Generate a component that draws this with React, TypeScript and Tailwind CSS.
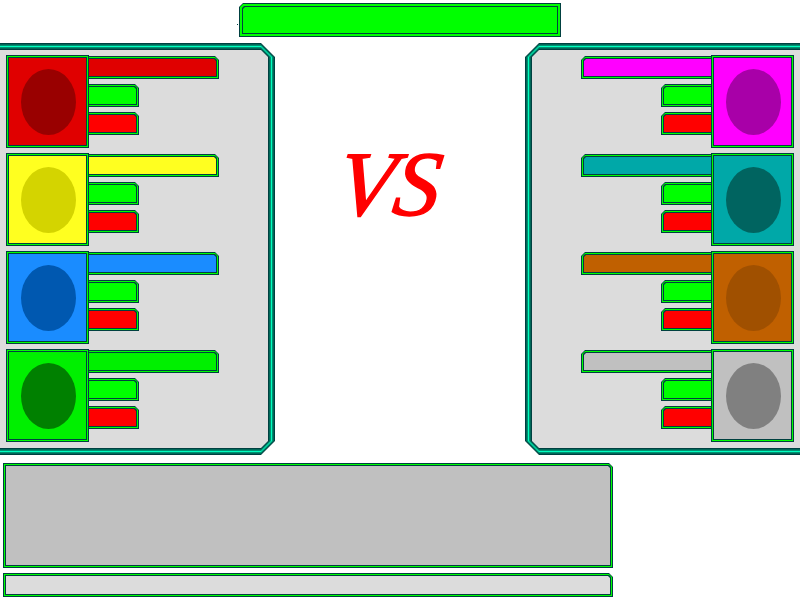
import type { ReactNode } from "react";

// clip per ring, outer to inner. The chamfer shrinks with each ring so the
// diagonal starts at the same spot on every layer
const CLIPS = {
  none: ["", "", "", ""],
  tr: [
    "[clip-path:polygon(0_0,calc(100%-4px)_0,100%_4px,100%_100%,0_100%)]",
    "[clip-path:polygon(0_0,calc(100%-3px)_0,100%_3px,100%_100%,0_100%)]",
    "[clip-path:polygon(0_0,calc(100%-2px)_0,100%_2px,100%_100%,0_100%)]",
    "[clip-path:polygon(0_0,calc(100%-2px)_0,100%_2px,100%_100%,0_100%)]",
  ],
  tl: [
    "[clip-path:polygon(4px_0,100%_0,100%_100%,0_100%,0_4px)]",
    "[clip-path:polygon(3px_0,100%_0,100%_100%,0_100%,0_3px)]",
    "[clip-path:polygon(2px_0,100%_0,100%_100%,0_100%,0_2px)]",
    "[clip-path:polygon(2px_0,100%_0,100%_100%,0_100%,0_2px)]",
  ],
};

function Frame({
  clip = "none",
  fill,
  ring = "p-px",
  className = "",
  children,
}: {
  clip?: "none" | "tr" | "tl";
  fill: string;
  ring?: string;
  className?: string;
  children?: ReactNode;
}) {
  const c = CLIPS[clip];
  return (
    <div className={`${c[0]} ${className} bg-[#004040] p-px`}>
      <div className={`${c[1]} ${ring} h-full bg-[#00ff00]`}>
        <div className={`${c[2]} h-full bg-[#004040] p-px`}>
          <div className={`${c[3]} ${fill} h-full`}>{children}</div>
        </div>
      </div>
    </div>
  );
}

// stepped bevel, 1px per band
const LEFT_RINGS = [
  "bg-[#004040] [clip-path:polygon(0_0,calc(100%-14px)_0,100%_14px,100%_calc(100%-14px),calc(100%-14px)_100%,0_100%)]",
  "bg-[#006858] [clip-path:polygon(0_0,calc(100%-13px)_0,100%_13px,100%_calc(100%-13px),calc(100%-13px)_100%,0_100%)]",
  "bg-[#009070] [clip-path:polygon(0_0,calc(100%-12px)_0,100%_12px,100%_calc(100%-12px),calc(100%-12px)_100%,0_100%)]",
  "bg-[#00ffc0] [clip-path:polygon(0_0,calc(100%-11px)_0,100%_11px,100%_calc(100%-11px),calc(100%-11px)_100%,0_100%)]",
  "bg-[#009070] [clip-path:polygon(0_0,calc(100%-10px)_0,100%_10px,100%_calc(100%-10px),calc(100%-10px)_100%,0_100%)]",
  "bg-[#006858] [clip-path:polygon(0_0,calc(100%-9px)_0,100%_9px,100%_calc(100%-9px),calc(100%-9px)_100%,0_100%)]",
  "bg-[#004040] [clip-path:polygon(0_0,calc(100%-8px)_0,100%_8px,100%_calc(100%-8px),calc(100%-8px)_100%,0_100%)]",
  "bg-[#dcdcdc] [clip-path:polygon(0_0,calc(100%-7px)_0,100%_7px,100%_calc(100%-7px),calc(100%-7px)_100%,0_100%)]",
];

const RIGHT_RINGS = [
  "bg-[#004040] [clip-path:polygon(14px_0,100%_0,100%_100%,14px_100%,0_calc(100%-14px),0_14px)]",
  "bg-[#006858] [clip-path:polygon(13px_0,100%_0,100%_100%,13px_100%,0_calc(100%-13px),0_13px)]",
  "bg-[#009070] [clip-path:polygon(12px_0,100%_0,100%_100%,12px_100%,0_calc(100%-12px),0_12px)]",
  "bg-[#00ffc0] [clip-path:polygon(11px_0,100%_0,100%_100%,11px_100%,0_calc(100%-11px),0_11px)]",
  "bg-[#009070] [clip-path:polygon(10px_0,100%_0,100%_100%,10px_100%,0_calc(100%-10px),0_10px)]",
  "bg-[#006858] [clip-path:polygon(9px_0,100%_0,100%_100%,9px_100%,0_calc(100%-9px),0_9px)]",
  "bg-[#004040] [clip-path:polygon(8px_0,100%_0,100%_100%,8px_100%,0_calc(100%-8px),0_8px)]",
  "bg-[#dcdcdc] [clip-path:polygon(7px_0,100%_0,100%_100%,7px_100%,0_calc(100%-7px),0_7px)]",
];

function Panel({ rings, inner, children }: { rings: string[]; inner: string; children: ReactNode }) {
  return (
    <div className={`h-full p-px ${rings[0]}`}>
      <div className={`h-full p-px ${rings[1]}`}>
        <div className={`h-full p-px ${rings[2]}`}>
          <div className={`h-full p-px ${rings[3]}`}>
            <div className={`h-full p-px ${rings[4]}`}>
              <div className={`h-full p-px ${rings[5]}`}>
                <div className={`h-full p-px ${rings[6]}`}>
                  <div className={`flex h-full flex-col gap-[5px] pt-[5px] ${inner} ${rings[7]}`}>{children}</div>
                </div>
              </div>
            </div>
          </div>
        </div>
      </div>
    </div>
  );
}

interface Player {
  color: string;
  oval: string;
}

const leftTeam: Player[] = [
  { color: "bg-[#e00000]", oval: "bg-[#990000]" },
  { color: "bg-[#ffff20]", oval: "bg-[#d4d400]" },
  { color: "bg-[#1a8cff]", oval: "bg-[#0058b0]" },
  { color: "bg-[#00f000]", oval: "bg-[#008000]" },
];

const rightTeam: Player[] = [
  { color: "bg-[#ff00ff]", oval: "bg-[#a800a8]" },
  { color: "bg-[#00a8a8]", oval: "bg-[#006460]" },
  { color: "bg-[#c06000]", oval: "bg-[#a05000]" },
  { color: "bg-[#c0c0c0]", oval: "bg-[#808080]" },
];

function Avatar({ player }: { player: Player }) {
  return (
    <div className="relative z-10 shrink-0">
      <Frame fill={`${player.color} flex items-center justify-center pl-[2px]`} className="h-[93px] w-[83px]">
        <div className={`${player.oval} h-[66px] w-[55px] rounded-[50%]`} />
      </Frame>
    </div>
  );
}

function LeftCard({ player }: { player: Player }) {
  return (
    <div className="flex h-[93px] items-start">
      <Avatar player={player} />
      <div className="-ml-[3px] flex flex-col gap-[5px] pt-px">
        <Frame clip="tr" fill={player.color} className="h-[23px] w-[133px]" />
        <Frame clip="tr" fill="bg-[#00ff00]" className="h-[23px] w-[53px]" />
        <Frame clip="tr" fill="bg-[#ff0000]" className="h-[23px] w-[53px]" />
      </div>
    </div>
  );
}

function RightCard({ player }: { player: Player }) {
  return (
    <div className="flex h-[93px] items-start justify-end">
      <div className="-mr-[3px] flex flex-col items-end gap-[5px] pt-px">
        <Frame clip="tl" fill={player.color} className="h-[23px] w-[133px]" />
        <Frame clip="tl" fill="bg-[#00ff00]" className="h-[23px] w-[53px]" />
        <Frame clip="tl" fill="bg-[#ff0000]" className="h-[23px] w-[53px]" />
      </div>
      <Avatar player={player} />
    </div>
  );
}

export default function App() {
  return (
    <div className="relative h-[600px] w-[800px] overflow-hidden bg-white">
      {/* title bar */}
      <div className="flex justify-center pt-[3px]">
        <Frame clip="tl" fill="bg-[#00ff00]" ring="p-[2px]" className="h-[34px] w-[322px]" />
      </div>
      <span className="absolute left-[237px] top-[24px] h-px w-px bg-[#004040]" />

      {/* teams */}
      <div className="mt-[6px] flex h-[412px] justify-between">
        <div className="-ml-[10px] h-full w-[285px]">
          <Panel rings={LEFT_RINGS} inner="pl-[9px]">
            {leftTeam.map((p) => (
              <LeftCard key={p.color} player={p} />
            ))}
          </Panel>
        </div>
        <div className="-mr-[10px] h-full w-[285px]">
          <Panel rings={RIGHT_RINGS} inner="pr-[9px]">
            {rightTeam.map((p) => (
              <RightCard key={p.color} player={p} />
            ))}
          </Panel>
        </div>
      </div>

      {/* VS */}
      <div className="absolute left-[338px] top-[134px] w-[104px] -skew-x-[8deg] text-center font-['Liberation_Serif',serif] text-[92px] italic leading-[100px] text-[#ff0000] [-webkit-text-stroke:1.5px_#ff0000]">
        VS
      </div>

      {/* log + input */}
      <div className="ml-[3px] mt-[8px] flex w-[610px] flex-col gap-[5px]">
        <Frame clip="tr" fill="bg-[#c0c0c0]" className="h-[105px]" />
        <Frame clip="tr" fill="bg-[#dcdcdc]" className="h-[24px]" />
      </div>
    </div>
  );
}
